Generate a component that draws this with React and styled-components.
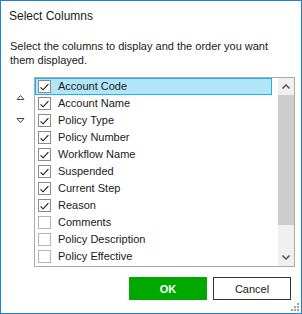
import * as React from 'react'
import styled, { createGlobalStyle } from 'styled-components'

const GlobalStyle = createGlobalStyle`
  html, body {
    margin: 0;
    padding: 0;
    background: #fff;
  }
  body {
    font-family: "Liberation Sans", Arial, sans-serif;
  }
`

const columns = [
  { name: 'Account Code', checked: true },
  { name: 'Account Name', checked: true },
  { name: 'Policy Type', checked: true },
  { name: 'Policy Number', checked: true },
  { name: 'Workflow Name', checked: true },
  { name: 'Suspended', checked: true },
  { name: 'Current Step', checked: true },
  { name: 'Reason', checked: true },
  { name: 'Comments', checked: false },
  { name: 'Policy Description', checked: false },
  { name: 'Policy Effective', checked: false },
]

const Window = styled.div`
  position: relative;
  width: 302px;
  height: 314px;
  box-sizing: border-box;
  border: 1px solid #1883d7;
  background: #fff;
  display: flex;
  flex-direction: column;
  color: #1a1a1a;
`

const Title = styled.h1`
  margin: 0;
  padding: 7px 0 0 8px;
  font-size: 12px;
  font-weight: normal;
  line-height: 16px;
  height: 16px;
`

const Description = styled.p`
  margin: 15px 0 0 0;
  padding: 0 9px;
  font-size: 11px;
  line-height: 14px;
  height: 28px;
`

const Body = styled.div`
  display: flex;
  margin-top: 10px;
`

const OrderColumn = styled.div`
  width: 33px;
  display: flex;
  flex-direction: column;
  align-items: flex-start;
  padding: 11px 0 0 15px;
  box-sizing: border-box;
  gap: 18px;
`

const OrderButton = styled.button`
  border: 0;
  background: none;
  padding: 0;
  width: 9px;
  height: 5px;
  display: block;
  cursor: pointer;
`

const ListBox = styled.div`
  width: 261px;
  height: 190px;
  box-sizing: border-box;
  border: 1px solid #ababab;
  display: flex;
`

const Items = styled.ul`
  list-style: none;
  margin: 0;
  padding: 0;
  flex: 1;
  overflow: hidden;
`

const Row = styled.li`
  height: 17px;
  width: 237px;
  box-sizing: border-box;
  display: flex;
  align-items: center;
  padding-left: 2px;
  font-size: 11px;
  line-height: 17px;
  white-space: nowrap;
  background: ${props => (props.selected ? '#b2e5f7' : 'transparent')};
  border: 1px solid ${props => (props.selected ? '#1cb3ea' : 'transparent')};
`

const Box = styled.span`
  width: 13px;
  height: 13px;
  box-sizing: border-box;
  border: 1px solid ${props => (props.checked ? '#8a8a8a' : '#b4b4b4')};
  background: #fff;
  display: flex;
  align-items: center;
  justify-content: center;
  margin-right: 7px;
  flex: none;
`

const Scrollbar = styled.div`
  width: 16px;
  display: flex;
  flex-direction: column;
  background: #f0f0f0;
`

const ScrollButton = styled.div`
  height: 17px;
  display: flex;
  align-items: center;
  justify-content: center;
  flex: none;
`

const Track = styled.div`
  flex: 1;
`

const Thumb = styled.div`
  height: ${props => props.size}px;
  background: #cdcdcd;
`

const Footer = styled.div`
  display: flex;
  justify-content: flex-end;
  gap: 6px;
  margin-top: 10px;
  padding-right: 10px;
`

const Button = styled.button`
  width: 78px;
  height: 23px;
  box-sizing: border-box;
  font-family: "Liberation Sans", Arial, sans-serif;
  font-size: 11px;
  padding: 0;
  cursor: pointer;
  background: ${props => (props.primary ? '#00a800' : '#fff')};
  color: ${props => (props.primary ? '#fff' : '#1a1a1a')};
  font-weight: ${props => (props.primary ? 'bold' : 'normal')};
  border: ${props => (props.primary ? '0' : '1px solid #333')};
`

const Grip = styled.svg`
  position: absolute;
  right: 1px;
  bottom: 1px;
`

const Check = () => (
  <svg width="9" height="8" viewBox="0 0 9 8">
    <path d="M0.6 4.3 L3.1 6.8 L8.4 1.2" fill="none" stroke="#111" strokeWidth="1.05" />
  </svg>
)

const Chevron = ({ down }) => (
  <svg width="8" height="5" viewBox="0 0 8 5">
    <path
      d={down ? 'M0.5 0.5 L4 4 L7.5 0.5' : 'M0.5 4.5 L4 1 L7.5 4.5'}
      fill="none"
      stroke="#606060"
      strokeWidth="1.6"
    />
  </svg>
)

const Triangle = ({ down }) => (
  <svg width="9" height="5" viewBox="0 0 9 5">
    <path
      d={down ? 'M1 0.5 L8 0.5 L4.5 4.5 Z' : 'M1 4.5 L8 4.5 L4.5 0.5 Z'}
      fill="none"
      stroke="#444"
      strokeWidth="1"
    />
  </svg>
)

export default function App() {
  return (
    <>
      <GlobalStyle />
      <Window>
        <Title>Select Columns</Title>
        <Description>
          Select the columns to display and the order you want them displayed.
        </Description>
        <Body>
          <OrderColumn>
            <OrderButton aria-label="Move up">
              <Triangle />
            </OrderButton>
            <OrderButton aria-label="Move down">
              <Triangle down />
            </OrderButton>
          </OrderColumn>
          <ListBox>
            <Items>
              {columns.map((c, i) => (
                <Row key={c.name} selected={i === 0}>
                  <Box checked={c.checked}>{c.checked && <Check />}</Box>
                  {c.name}
                </Row>
              ))}
            </Items>
            <Scrollbar>
              <ScrollButton>
                <Chevron />
              </ScrollButton>
              <Track>
                <Thumb size={130} />
              </Track>
              <ScrollButton>
                <Chevron down />
              </ScrollButton>
            </Scrollbar>
          </ListBox>
        </Body>
        <Footer>
          <Button primary>OK</Button>
          <Button>Cancel</Button>
        </Footer>
        <Grip width="10" height="10" viewBox="0 0 10 10">
          <g fill="#a0a0a0">
            <rect x="7" y="1" width="2" height="2" />
            <rect x="4" y="4" width="2" height="2" />
            <rect x="7" y="4" width="2" height="2" />
            <rect x="1" y="7" width="2" height="2" />
            <rect x="4" y="7" width="2" height="2" />
            <rect x="7" y="7" width="2" height="2" />
          </g>
        </Grip>
      </Window>
    </>
  )
}
